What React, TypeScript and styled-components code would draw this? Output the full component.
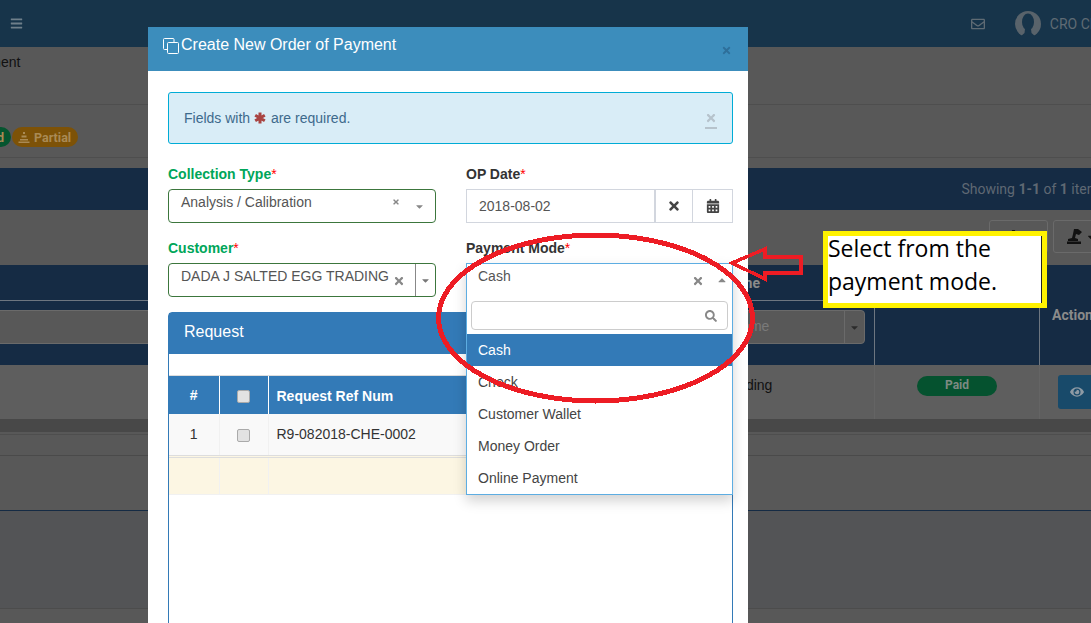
import React from 'react'
import styled, { createGlobalStyle } from 'styled-components'
import { FaBars, FaCalendarAlt, FaDownload, FaEye, FaRegEnvelope, FaSearch, FaTimes, FaCaretDown, FaCaretUp } from 'react-icons/fa'

const Global = createGlobalStyle`
  html, body { margin: 0; padding: 0; height: 623px; overflow: hidden; background: #585858; }
  body { font-family: "Liberation Sans", Arial, sans-serif; font-size: 14px; color: #333; }
  * { box-sizing: border-box; }
`

const modes = ['Check', 'Customer Wallet', 'Money Order', 'Online Payment']

const App: React.FC = () => {
  return (
    <Page>
      <Global />
      <TopBar>
        <MenuBtn><FaBars /></MenuBtn>
        <TopRight>
          <FaRegEnvelope size={14} color="#5f6b74" />
          <Avatar viewBox="0 0 26 26">
            <circle cx="13" cy="13" r="13" fill="#59636b" />
            <ellipse cx="13" cy="11" rx="6" ry="8.5" fill="#17344a" />
            <path d="M10 18 L16 18 L16.5 22 L21 26 L5 26 L9.5 22 Z" fill="#17344a" />
          </Avatar>
          <UserName>CRO CRO</UserName>
        </TopRight>
      </TopBar>

      <Crumb>Order of Payment</Crumb>
      <BadgeRow>
        <StatusBadge color="#05552f">Paid</StatusBadge>
        <StatusBadge color="#7d5207">
          <PyramidIcon viewBox="0 0 12 12">
            <path d="M5 1h2v2H5zM3.500 4.500h5v2h-5zM2 8h8v1.500H2zM0.500 10.500h11V12H0.500z" fill="#a98a55" />
          </PyramidIcon>
          Partial
        </StatusBadge>
      </BadgeRow>

      <GridTitle>
        <span>Showing <b>1-1</b> of <b>1</b> item</span>
      </GridTitle>
      <Toolbar>
        <ToolBtn shift={10}><FaDownload size={13} color="#111" /></ToolBtn>
        <ToolBtn shift={3}>
          <StampIcon viewBox="0 0 15 15">
            <path d="M7 0h4l4 3-3 3-3-1-1 4 3 1v2H1v-2l4-1 1-4z" fill="#111" />
            <rect x="0" y="12.500" width="14" height="2.500" fill="#111" />
          </StampIcon>
          <FaCaretDown size={10} color="#111" />
        </ToolBtn>
      </Toolbar>

      <BgHead>
        <HeadLabel>Name</HeadLabel>
        <FilterCell>
          <FilterSelect>
            <FilterText>Name</FilterText>
            <FilterCaret><FaCaretDown size={11} /></FilterCaret>
          </FilterSelect>
        </FilterCell>
        <SpanCell />
        <SpanCell>
          <ActionLabel>Action</ActionLabel>
        </SpanCell>
      </BgHead>

      <BgRow>
        <BgCell>Pending</BgCell>
        <BgCell><PaidPill>Paid</PaidPill></BgCell>
        <BgCell><EyeBtn><FaEye size={14} /></EyeBtn></BgCell>
      </BgRow>
      <DarkBand />
      <PlainStrip />
      <PlainStrip2 />
      <NavyLine />
      <BottomFill />

      <Modal>
        <ModalHead>
          <ModalTitle>
            <CopyIcon viewBox="0 0 16 16">
              <path d="M4 11.500H1.500a1 1 0 0 1-1-1V1.500a1 1 0 0 1 1-1H10a1 1 0 0 1 1 1V4" fill="none" stroke="#fff" />
              <rect x="4.500" y="4.500" width="11" height="11" rx="1" fill="none" stroke="#fff" />
            </CopyIcon>
            Create New Order of Payment
          </ModalTitle>
          <ModalClose><FaTimes size={11} /></ModalClose>
        </ModalHead>
        <ModalBody>
          <Alert>
            <span>
              Fields with{' '}
              <StarIcon viewBox="0 0 12 12">
                <path d="M6 0.500V11.500M1.200 3.200L10.800 8.800M10.800 3.200L1.200 8.800" stroke="#a94442" strokeWidth="3" />
              </StarIcon>{' '}
              are required.
            </span>
            <AlertClose><FaTimes size={12} /></AlertClose>
          </Alert>
          <FormGrid>
            <Field>
              <Label green>Collection Type<Req>*</Req></Label>
              <GreenSelect>
                <SelectText>Analysis / Calibration</SelectText>
                <SmallX><FaTimes size={8} /></SmallX>
                <SelectCaret wide={21}><FaCaretDown size={11} /></SelectCaret>
              </GreenSelect>
            </Field>
            <Field>
              <Label>OP Date<Req>*</Req></Label>
              <DateGroup>
                <DateInput>2018-08-02</DateInput>
                <Addon><FaTimes size={14} /></Addon>
                <Addon narrow><FaCalendarAlt size={14} /></Addon>
              </DateGroup>
            </Field>
            <Field>
              <Label green>Customer<Req>*</Req></Label>
              <GreenSelect>
                <SelectText>DADA J SALTED EGG TRADING</SelectText>
                <BigX space={18}><FaTimes size={12} /></BigX>
                <CaretBox><FaCaretDown size={11} /></CaretBox>
              </GreenSelect>
            </Field>
            <Field>
              <Label>Payment Mode<Req>*</Req></Label>
              <Dropdown>
                <DropTop>
                  <SelectText>Cash</SelectText>
                  <BigX space={12}><FaTimes size={12} /></BigX>
                  <SelectCaret wide={16}><FaCaretUp size={12} /></SelectCaret>
                </DropTop>
                <SearchWrap>
                  <SearchBox><FaSearch size={12} color="#888" /></SearchBox>
                </SearchWrap>
                <Option active>Cash</Option>
                {modes.map((m) => <Option key={m}>{m}</Option>)}
              </Dropdown>
            </Field>
          </FormGrid>

          <Panel>
            <PanelHead>Request</PanelHead>
            <PanelGap />
            <Table>
              <thead>
                <tr>
                  <Th width={50}>#</Th>
                  <Th width={49}><Check /></Th>
                  <Th left>Request Ref Num</Th>
                </tr>
              </thead>
              <tbody>
                <tr>
                  <Td center>1</Td>
                  <Td center><Check /></Td>
                  <Td>R9-082018-CHE-0002</Td>
                </tr>
                <tr>
                  <SumCell /><SumCell /><SumCell />
                </tr>
              </tbody>
            </Table>
          </Panel>
        </ModalBody>
      </Modal>

      <RedMarks viewBox="0 0 1091 623" shapeRendering="crispEdges">
        <ellipse cx="595.500" cy="318" rx="157" ry="83" fill="none" stroke="#ed1c24" strokeWidth="5" />
        <path d="M732 263 L765 249 L765 257 L801 257 L801 273 L765 273 L765 279 Z" fill="none" stroke="#ed1c24" strokeWidth="3.500" />
      </RedMarks>

      <Callout><CalloutText>Select from the<br />payment mode.</CalloutText></Callout>
    </Page>
  )
}

export default App

const Page = styled.div`
  position: relative;
  width: 1091px;
  height: 623px;
  overflow: hidden;
  background: #585858;
`
const TopBar = styled.div`
  height: 47px;
  background: #17344a;
  display: flex;
  align-items: center;
  justify-content: space-between;
`
const MenuBtn = styled.div`
  margin-left: 10px;
  color: #6f7f8a;
  font-size: 13px;
  display: flex;
`
const TopRight = styled.div`
  display: flex;
  align-items: center;
  gap: 22px;
  margin-right: -17px;
`
const Avatar = styled.svg`
  width: 26px;
  height: 26px;
  margin: 0 -13px 0 8px;
`
const UserName = styled.span`
  font-family: Roboto, sans-serif;
  font-size: 14px;
  color: #5f6b74;
`
const Crumb = styled.div`
  height: 58px;
  margin-left: -90px;
  padding-top: 7px;
  line-height: 16px;
  color: #111;
  border-bottom: 1px solid #4e4e4e;
`
const BadgeRow = styled.div`
  height: 53px;
  margin-left: -27px;
  padding-top: 22px;
  display: flex;
  gap: 1px;
  border-bottom: 1px solid #4e4e4e;
`
const StatusBadge = styled.div<{ color: string }>`
  height: 20px;
  padding: 0 7px 0 6px;
  border-radius: 10px;
  background: ${(props) => props.color};
  color: #a98a55;
  font-family: Roboto, sans-serif;
  font-weight: 700;
  font-size: 12.5px;
  display: flex;
  align-items: center;
  gap: 4px;
`
const PyramidIcon = styled.svg`
  width: 12px;
  height: 12px;
`
const GridTitle = styled.div`
  margin-top: 10px;
  height: 42px;
  background: #152b44;
  color: #5f6873;
  font-family: Roboto, sans-serif;
  font-size: 14px;
  display: flex;
  align-items: center;
  justify-content: flex-end;
  white-space: nowrap;
  margin-right: -8px;
`
const Toolbar = styled.div`
  height: 55px;
  padding: 10px 0 0 989px;
  display: flex;
  gap: 5px;
`
const ToolBtn = styled.div<{ shift?: number }>`
  flex: none;
  width: 59px;
  height: 33px;
  border: 1px solid #6a6a6a;
  border-radius: 3px;
  display: flex;
  align-items: center;
  justify-content: center;
  gap: 4px;
  padding-right: ${(props) => props.shift || 0}px;
`
const StampIcon = styled.svg`
  width: 15px;
  height: 15px;
`
const BgHead = styled.div`
  height: 100px;
  background: #152b44;
  display: grid;
  grid-template-columns: 875px 165px 52px;
  grid-template-rows: 36px 64px;
`
const HeadLabel = styled.div`
  grid-column: 1;
  grid-row: 1;
  border-bottom: 1px solid #6d7680;
  padding: 10px 0 0 723px;
  font-family: Roboto, sans-serif;
  font-weight: 700;
  color: #8a8a8a;
`
const FilterCell = styled.div`
  grid-column: 1;
  grid-row: 2;
  border-right: 1px solid #6d7680;
  padding-top: 9px;
`
const SpanCell = styled.div`
  grid-row: 1 / 3;
  border-right: 1px solid #6d7680;
  &:last-child { border-right: 0; }
`
const FilterSelect = styled.div`
  margin: 0 9px 0 -10px;
  height: 34px;
  background: #585858;
  border-radius: 4px;
  border: 1px solid #6a6a6a;
  display: flex;
  justify-content: space-between;
  padding-left: 741px;
`
const FilterText = styled.div`
  line-height: 30px;
  color: #7a7a7a;
`
const FilterCaret = styled.div`
  width: 20px;
  border-left: 1px solid #6a6a6a;
  color: #2b2b2b;
  display: flex;
  align-items: center;
  justify-content: center;
`
const ActionLabel = styled.div`
  padding: 42px 0 0 12px;
  font-family: Roboto, sans-serif;
  font-weight: 700;
  color: #8a8a8a;
  white-space: nowrap;
`
const BgRow = styled.div`
  height: 54px;
  display: grid;
  grid-template-columns: 875px 165px 52px;
  background: #5e5e5e;
`
const BgCell = styled.div`
  padding-top: 12px;
  color: #111;
  border-right: 1px solid #646464;
  &:first-child { padding-left: 721px; }
  &:nth-child(2) { padding-left: 42px; padding-top: 11px; }
  &:last-child { border-right: 0; padding: 10px 0 0 18px; }
`
const PaidPill = styled.div`
  width: 80px;
  height: 20px;
  border-radius: 10px;
  background: #05522f;
  color: #7d8a82;
  font-family: Roboto, sans-serif;
  font-weight: 700;
  font-size: 12px;
  line-height: 18px;
  text-align: center;
`
const EyeBtn = styled.div`
  width: 40px;
  height: 34px;
  border-radius: 3px;
  background: #184a6a;
  color: #8d9aa4;
  display: flex;
  align-items: center;
  justify-content: center;
  padding-right: 2px;
`
const DarkBand = styled.div`
  height: 13px;
  background: #484848;
`
const PlainStrip = styled.div`
  height: 22px;
  margin-top: 2px;
  border-top: 1px solid #4e4e4e;
  border-bottom: 1px solid #4a4a4a;
`
const PlainStrip2 = styled.div`
  height: 54px;
`
const NavyLine = styled.div`
  height: 1px;
  background: #152b44;
`
const BottomFill = styled.div`
  height: 98px;
  background: #535456;
  border-bottom: 1px solid #4c4c4c;
`
const Modal = styled.div`
  position: absolute;
  left: 148px;
  top: 27px;
  width: 600px;
  height: 700px;
  background: #fff;
`
const ModalHead = styled.div`
  height: 44px;
  background: #3c8dbc;
  color: #fff;
  display: flex;
  justify-content: space-between;
  padding: 0 15px;
`
const ModalTitle = styled.div`
  font-size: 16px;
  line-height: 36px;
  display: flex;
  align-items: center;
  height: 36px;
  gap: 2px;
`
const CopyIcon = styled.svg`
  width: 16px;
  height: 16px;
  margin-top: 2px;
`
const ModalClose = styled.div`
  color: #2e6f9a;
  padding-top: 16px;
  margin-right: 1px;
`
const ModalBody = styled.div`
  padding: 21px 15px 0 20px;
`
const Alert = styled.div`
  height: 52px;
  background: #d9edf7;
  border: 1px solid #00acd6;
  border-radius: 3px;
  color: #3e6a8c;
  padding: 0 15px;
  display: flex;
  align-items: center;
  justify-content: space-between;
`
const StarIcon = styled.svg`
  width: 12px;
  height: 12px;
  margin-right: 1px;
  vertical-align: -1px;
`
const AlertClose = styled.div`
  color: #b6c3cc;
  border-bottom: 2px solid #b6c3cc;
  padding: 0 0 3px;
  display: flex;
  margin: 5px 0 0;
`
const FormGrid = styled.div`
  margin-top: 22px;
  display: grid;
  grid-template-columns: 268px 267px;
  column-gap: 30px;
  row-gap: 15px;
`
const Field = styled.div`
  position: relative;
  height: 59px;
`
const Label = styled.div<{ green?: boolean }>`
  height: 23px;
  line-height: 16px;
  font-weight: 700;
  color: ${(props) => (props.green ? '#00a65a' : '#333')};
`
const Req = styled.span`
  color: #f00;
  font-weight: 400;
`
const GreenSelect = styled.div`
  height: 34px;
  border: 1px solid #3c763d;
  border-radius: 4px;
  display: flex;
  position: relative;
  padding-left: 12px;
`
const SelectText = styled.div`
  flex: 1;
  line-height: 24px;
  color: #555;
  white-space: nowrap;
`
const SmallX = styled.div`
  color: #888;
  padding-top: 3px;
  margin-right: 14px;
`
const BigX = styled.div<{ space: number }>`
  color: #888;
  padding-top: 10px;
  margin-right: ${(props) => props.space}px;
`
const SelectCaret = styled.div<{ wide: number }>`
  color: #888;
  width: ${(props) => props.wide}px;
  padding-top: 9px;
`
const CaretBox = styled.div`
  width: 20px;
  margin-left: -8px;
  border-left: 1px solid #888;
  color: #777;
  display: flex;
  align-items: center;
  justify-content: center;
`
const DateGroup = styled.div`
  height: 34px;
  display: flex;
`
const DateInput = styled.div`
  flex: 1;
  border: 1px solid #d2d6de;
  border-right: 0;
  line-height: 32px;
  padding-left: 12px;
  color: #555;
`
const Addon = styled.div<{ narrow?: boolean }>`
  width: ${(props) => (props.narrow ? '40px' : '39px')};
  border: 1px solid #d2d6de;
  border-left-width: ${(props) => (props.narrow ? '0' : '2px')};
  color: #444;
  display: flex;
  align-items: center;
  justify-content: center;
`
const Dropdown = styled.div`
  position: absolute;
  left: 0;
  top: 23px;
  width: 267px;
  height: 232px;
  z-index: 2;
  background: #fff;
  border: 1px solid #5dade2;
  box-shadow: 0 6px 12px rgba(0, 0, 0, 0.175);
`
const DropTop = styled.div`
  height: 37px;
  display: flex;
  padding-left: 11px;
`
const SearchWrap = styled.div`
  padding: 0 4px;
  height: 33px;
`
const SearchBox = styled.div`
  height: 29px;
  border: 1px solid #ccc;
  border-radius: 4px;
  display: flex;
  align-items: center;
  justify-content: flex-end;
  padding-right: 10px;
`
const Option = styled.div<{ active?: boolean }>`
  height: 32px;
  line-height: 32px;
  padding-left: 11px;
  background: ${(props) => (props.active ? '#337ab7' : 'transparent')};
  color: ${(props) => (props.active ? '#fff' : '#444')};
`
const Panel = styled.div`
  margin-top: 13px;
  height: 400px;
  border: 1px solid #337ab7;
  border-radius: 4px 4px 0 0;
`
const PanelHead = styled.div`
  height: 41px;
  background: #337ab7;
  color: #fff;
  font-size: 16px;
  line-height: 37px;
  padding-left: 15px;
`
const PanelGap = styled.div`
  height: 22px;
  border-bottom: 1px solid #ddd;
`
const Table = styled.table`
  width: 100%;
  border-collapse: collapse;
  table-layout: fixed;
`
const Th = styled.th<{ left?: boolean; width?: number }>`
  height: 38px;
  width: ${(props) => (props.width ? `${props.width}px` : 'auto')};
  background: #337ab7;
  color: #fff;
  border-right: 1px solid #fff;
  padding: ${(props) => (props.left ? '2px 8px 0' : '0')};
  text-align: ${(props) => (props.left ? 'left' : 'center')};
  font-size: 14px;
`
const Td = styled.td<{ center?: boolean }>`
  height: 42px;
  background: #f9f9f9;
  padding: 0 8px;
  text-align: ${(props) => (props.center ? 'center' : 'left')};
  border-right: 1px solid #f1f1f1;
  border-bottom: 3px double #ddd;
`
const SumCell = styled.td`
  height: 38px;
  background: #fcf6e3;
  border-right: 1px solid #f1f1f1;
  border-bottom: 1px solid #f1f1f1;
`
const Check = styled.span`
  display: inline-block;
  width: 13px;
  height: 13px;
  vertical-align: middle;
  background: #e2e2e2;
  border: 1px solid #aaa;
  border-radius: 2px;
`
const RedMarks = styled.svg`
  position: absolute;
  left: 0;
  top: 0;
  width: 1091px;
  height: 623px;
  z-index: 3;
`
const Callout = styled.div`
  position: absolute;
  z-index: 4;
  left: 823px;
  top: 231px;
  width: 224px;
  height: 77px;
  background: #fff;
  border: 5px solid #fff200;
  box-shadow: inset -1px 0 0 #222;
`
const CalloutText = styled.div`
  margin-top: -4px;
  font-family: "Open Sans", sans-serif;
  font-size: 23px;
  line-height: 33px;
  color: #000;
  white-space: nowrap;
`
